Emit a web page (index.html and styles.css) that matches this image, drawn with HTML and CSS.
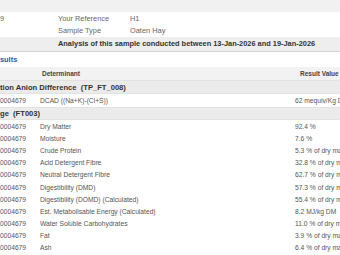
FILE: index.html
```html
<!DOCTYPE html>
<html>
<head>
<meta charset="utf-8">
<link rel="stylesheet" href="styles.css">
</head>
<body>
<div class="page">
  <div class="top-band"></div>
  <div class="info">
    <span class="info-a">9</span><span class="info-l">Your Reference</span><span class="info-v">H1</span>
    <span class="info-a"></span><span class="info-l">Sample Type</span><span class="info-v">Oaten Hay</span>
  </div>
  <div class="analysis">Analysis of this sample conducted between 13-Jan-2026 and 19-Jan-2026</div>
  <div class="results-link">sults</div>
  <div class="table">
    <div class="row head"><span></span><span class="h-det">Determinant</span><span class="h-res">Result Value</span></div>
    <div class="row group"><span class="g-text">tion Anion Difference&nbsp; (TP_FT_008)</span></div>
    <div class="row data first"><span>0004679</span><span>DCAD ((Na+K)-(Cl+S))</span><span>62 mequiv/Kg DM</span></div>
    <div class="row group g2"><span class="g-text">ge&nbsp; (FT003)</span></div>
    <div class="row data"><span>0004679</span><span>Dry Matter</span><span>92.4 %</span></div>
    <div class="row data"><span>0004679</span><span>Moisture</span><span>7.6 %</span></div>
    <div class="row data"><span>0004679</span><span>Crude Protein</span><span>5.3 % of dry matter</span></div>
    <div class="row data"><span>0004679</span><span>Acid Detergent Fibre</span><span>32.8 % of dry matter</span></div>
    <div class="row data"><span>0004679</span><span>Neutral Detergent Fibre</span><span>62.7 % of dry matter</span></div>
    <div class="row data"><span>0004679</span><span>Digestibility (DMD)</span><span>57.3 % of dry matter</span></div>
    <div class="row data"><span>0004679</span><span>Digestibility (DOMD) (Calculated)</span><span>55.4 % of dry matter</span></div>
    <div class="row data"><span>0004679</span><span>Est. Metabolisable Energy (Calculated)</span><span>8.2 MJ/kg DM</span></div>
    <div class="row data"><span>0004679</span><span>Water Soluble Carbohydrates</span><span>11.0 % of dry matter</span></div>
    <div class="row data"><span>0004679</span><span>Fat</span><span>3.9 % of dry matter</span></div>
    <div class="row data"><span>0004679</span><span>Ash</span><span>6.4 % of dry matter</span></div>
    <div class="row foot"></div>
  </div>
</div>
</body>
</html>
```
FILE: styles.css
```css
html, body {
  margin: 0;
  padding: 0;
  background: #ffffff;
  overflow: hidden;
}
body {
  width: 340px;
  height: 255px;
  font-family: "Liberation Sans", Arial, sans-serif;
  color: #555;
}
.page {
  width: 340px;
  white-space: nowrap;
  overflow: hidden;
}
.top-band {
  height: 12px;
  background: #f1f1f1;
}
.info {
  display: grid;
  grid-template-columns: 58px 72px 1fr;
  grid-auto-rows: 12px;
  padding-top: 1px;
  font-size: 7.4px;
  line-height: 12px;
  color: #666;
}
.info-a { padding-left: 0; }
.analysis {
  height: 14px;
  line-height: 14px;
  background: #eeeeee;
  border-bottom: 1px solid #d4d4d4;
  padding-left: 58px;
  font-size: 7.4px;
  font-weight: bold;
  color: #333;
}
.results-link {
  height: 15px;
  line-height: 15px;
  font-size: 7.4px;
  font-weight: bold;
  color: #2d5a9a;
}
.table {
  display: flex;
  flex-direction: column;
}
.row {
  display: grid;
  grid-template-columns: 40px 255px 1fr;
  align-items: center;
}
.head {
  height: 13px;
  background: #f2f2f2;
  font-size: 6.5px;
  font-weight: bold;
  color: #444;
}
.h-det { padding-left: 2px; }
.h-res { padding-left: 5px; }
.group {
  height: 14px;
  background: #ebebeb;
  border-top: 1px solid #e2e2e2;
  border-bottom: 1px solid #e2e2e2;
  box-sizing: border-box;
  font-size: 7.6px;
  font-weight: bold;
  color: #333;
}
.g2 { height: 13px; }
.g-text { grid-column: 1 / 4; }
.data {
  height: 12.2px;
  font-size: 6.7px;
  color: #555;
}
.data.first { height: 13px; }
.foot {
  height: 2px;
  margin-top: 2px;
  background: #e6e6e6;
}
```
